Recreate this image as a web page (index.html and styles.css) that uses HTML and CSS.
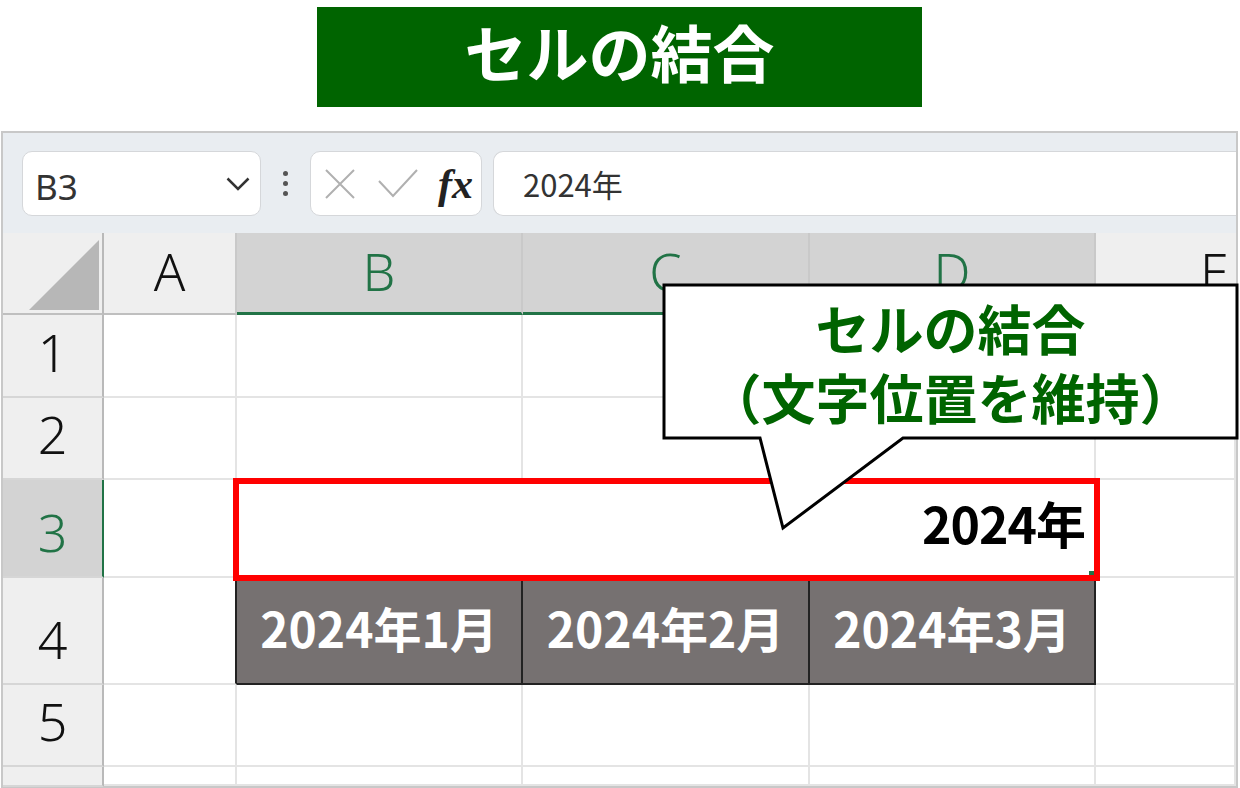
FILE: index.html
```html
<!DOCTYPE html>
<html lang="ja">

<head>
  <meta charset="UTF-8">
  <meta name="viewport" content="width=device-width, initial-scale=1.0">
  <title>セルの結合</title>
  <link rel="stylesheet" href="styles.css">
</head>

<body>
  <div class="title-banner">セルの結合</div>

  <div class="sheet">
    <div class="formula-bar">
      <div class="name-box">
        <span>B3</span>
        <svg class="chevron" width="24" height="14" viewBox="0 0 24 14">
          <path d="M1.5 1.5 L12 12 L22.5 1.5" />
        </svg>
      </div>
      <div class="more-dots"><span></span><span></span><span></span></div>
      <div class="fx-box">
        <svg class="cancel" width="30" height="30" viewBox="0 0 30 30">
          <path d="M1 1 L29 29 M29 1 L1 29" />
        </svg>
        <svg class="enter" width="40" height="30" viewBox="0 0 40 30">
          <path d="M1 12 L15 27 L39 1" />
        </svg>
        <span class="fx">fx</span>
      </div>
      <div class="formula-input">2024年</div>
    </div>

    <div class="grid">
      <div class="corner">
        <svg width="99" height="80" viewBox="0 0 99 80">
          <polygon points="26,77 96,77 96,7" />
        </svg>
      </div>
      <div class="col-head">A</div>
      <div class="col-head selected">B</div>
      <div class="col-head selected">C</div>
      <div class="col-head selected">D</div>
      <div class="col-head last">E</div>

      <div class="row-head">1</div>
      <div class="cell"></div>
      <div class="cell"></div>
      <div class="cell"></div>
      <div class="cell"></div>
      <div class="cell"></div>

      <div class="row-head">2</div>
      <div class="cell"></div>
      <div class="cell"></div>
      <div class="cell"></div>
      <div class="cell"></div>
      <div class="cell"></div>

      <div class="row-head selected">3</div>
      <div class="cell"></div>
      <div class="cell merged">2024年<span class="fill-handle"></span></div>
      <div class="cell"></div>

      <div class="row-head">4</div>
      <div class="cell dark-edge"></div>
      <div class="cell month">2024年1月</div>
      <div class="cell month">2024年2月</div>
      <div class="cell month">2024年3月</div>
      <div class="cell"></div>

      <div class="row-head">5</div>
      <div class="cell"></div>
      <div class="cell"></div>
      <div class="cell"></div>
      <div class="cell"></div>
      <div class="cell"></div>

      <div class="row-head"></div>
      <div class="cell"></div>
      <div class="cell"></div>
      <div class="cell"></div>
      <div class="cell"></div>
      <div class="cell"></div>
    </div>

    <!-- speech bubble laid over the sheet -->
    <div class="callout">
      <svg class="bubble" width="580" height="250" viewBox="0 0 580 250">
        <path d="M3 2 H576 V155 H242 L122 245 L99 155 H3 Z" />
      </svg>
      <p class="callout-text">セルの結合<br>（文字位置を維持）</p>
    </div>
  </div>
</body>

</html>
```

FILE: styles.css
```css
body {
  margin: 0;
  background: #fff;
  font-family: "Noto Sans", "Noto Sans CJK JP", sans-serif;
}

.title-banner {
  margin: 7px 0 0 317px;
  width: 605px;
  height: 100px;
  box-sizing: border-box;
  padding-bottom: 12px;
  background: #006400;
  color: #fff;
  display: flex;
  align-items: center;
  justify-content: center;
  font-family: "Noto Sans CJK JP", sans-serif;
  font-weight: 700;
  font-size: 62px;
}

.sheet {
  position: relative;
  margin: 24px 2px 0 1px;
  border: 2px solid #c8c8c8;
}

/* formula bar */

.formula-bar {
  height: 100px;
  box-sizing: border-box;
  padding: 18px 0 0 19px;
  background: #e9edf1;
  display: flex;
  align-items: flex-start;
}

.name-box,
.fx-box,
.formula-input {
  height: 65px;
  box-sizing: border-box;
  background: #fff;
  border: 1.5px solid #d5d7da;
  border-radius: 10px;
  display: flex;
  align-items: center;
}

.name-box {
  width: 239px;
  justify-content: space-between;
  padding: 6px 10px 0 12px;
  font-size: 35px;
  color: #333;
}

.chevron path {
  fill: none;
  stroke: #333;
  stroke-width: 2.5;
}

.chevron {
  margin-top: -6px;
}

.more-dots {
  width: 49px;
  height: 65px;
  display: flex;
  flex-direction: column;
  align-items: center;
  justify-content: center;
  gap: 5px;
}

.more-dots span {
  width: 5px;
  height: 5px;
  border-radius: 50%;
  background: #555;
}

.fx-box {
  width: 172px;
  padding-left: 14px;
}

.cancel path,
.enter path {
  fill: none;
  stroke: #b0b0b0;
  stroke-width: 2;
}

.enter {
  margin-left: 23px;
}

.fx {
  margin-left: 20px;
  font-family: "Liberation Serif", serif;
  font-style: italic;
  font-weight: 700;
  font-size: 42px;
  color: #222;
}

.formula-input {
  flex: 1;
  margin-left: 11px;
  border-right: none;
  border-radius: 10px 0 0 10px;
  padding-left: 29px;
  font-family: "Noto Sans CJK JP", sans-serif;
  font-size: 31px;
  color: #333;
}

/* sheet grid */

.grid {
  display: grid;
  grid-template-columns: 101px 133px 286px 287px 286px 1fr;
  grid-template-rows: 82px 83px 82px 98px 107px 82px 19px;
}

.grid > div {
  box-sizing: border-box;
}

.corner {
  background: #efefef;
  border-right: 2px solid #b9b9b9;
  border-bottom: 2px solid #bfbfbf;
}

.corner svg {
  display: block;
}

.corner polygon {
  fill: #b7b7b7;
}

.col-head,
.row-head {
  background: #efefef;
  display: flex;
  justify-content: center;
  align-items: flex-end;
  font-size: 52px;
  font-weight: 300;
  line-height: 1;
  color: #111;
}

.col-head {
  border-right: 2px solid #c9c9c9;
  border-bottom: 2px solid #bfbfbf;
  padding-bottom: 16px;
}

.col-head.selected {
  background: #d3d3d3;
  color: #217346;
  border-bottom: 3px solid #217346;
  padding-bottom: 15px;
}

.col-head.last {
  justify-content: flex-start;
  padding-left: 104px;
  border-right: none;
}

.row-head {
  border-right: 2px solid #b9b9b9;
  border-bottom: 2px solid #d6d6d6;
  padding-bottom: 18px;
}

.row-head.selected {
  background: #d3d3d3;
  color: #217346;
  border-right-color: #217346;
}

.cell {
  border-right: 2px solid #e4e4e4;
  border-bottom: 2px solid #e4e4e4;
}

.merged {
  grid-column: span 3;
  position: relative;
  padding: 17px 9px 0 0;
  text-align: right;
  font-family: "Noto Sans CJK JP", sans-serif;
  font-weight: 700;
  font-size: 50px;
  letter-spacing: -1px;
  line-height: 1;
  color: #000;
}

.merged::after {
  content: '';
  position: absolute;
  left: -4px;
  top: -2px;
  right: -6px;
  bottom: -5px;
  border: 6px solid #ff0000;
}

.fill-handle {
  position: absolute;
  right: 0;
  bottom: 0;
  width: 5px;
  height: 5px;
  background: #217346;
}

.dark-edge {
  border-right-color: #222;
}

.month {
  background: #767171;
  border-right-color: #222;
  border-bottom-color: #222;
  padding-top: 25px;
  text-align: center;
  font-family: "Noto Sans CJK JP", sans-serif;
  font-weight: 700;
  font-size: 48px;
  line-height: 1;
  color: #fff;
}

/* speech bubble */

.callout {
  position: absolute;
  left: 658px;
  top: 150px;
  width: 580px;
  height: 250px;
}

.bubble {
  position: absolute;
  left: 0;
  top: 0;
}

.bubble path {
  fill: #fff;
  stroke: #000;
  stroke-width: 3;
}

.callout-text {
  position: relative;
  margin: 2px 0 0 3px;
  width: 573px;
  height: 153px;
  display: flex;
  align-items: center;
  justify-content: center;
  text-align: center;
  font-family: "Noto Sans CJK JP", sans-serif;
  font-weight: 700;
  font-size: 54px;
  line-height: 69px;
  color: #006400;
}
```
